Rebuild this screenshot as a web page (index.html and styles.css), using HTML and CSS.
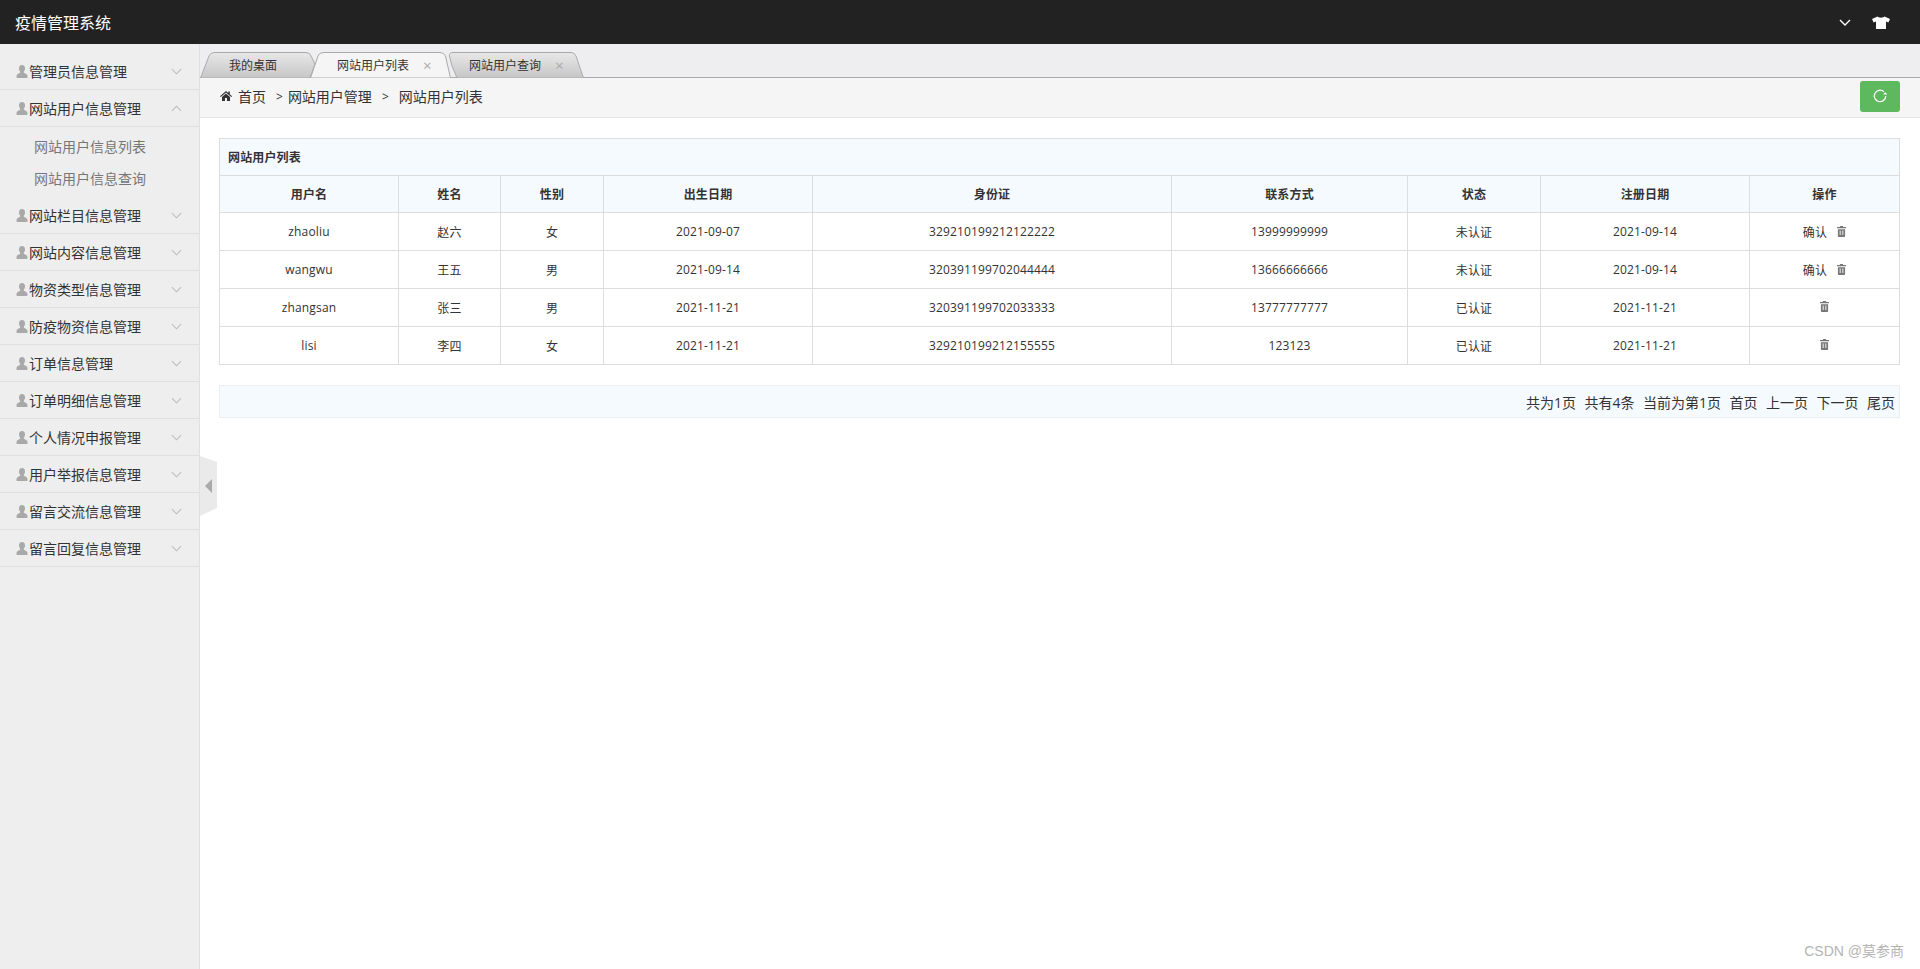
FILE: index.html
```html
<!DOCTYPE html>
<html lang="zh-CN">
<head>
<meta charset="utf-8">
<title>疫情管理系统</title>
<link rel="stylesheet" href="styles.css">
</head>
<body>
<header class="topbar">
  <div class="brand">疫情管理系统</div>
  <div class="top-actions">
    <svg class="top-chevron" viewBox="0 0 12 7"><path d="M1 1l5 5 5-5" fill="none" stroke="#fff" stroke-width="1.4"/></svg>
    <svg class="top-shirt" viewBox="0 0 18 13"><path d="M5.5 0.5L0 3l1.6 3.4L4 5.6V13h10V5.6l2.4.8L18 3 12.5.5C11.5 2 6.500 2 5.500.5z" fill="#fff"/></svg>
  </div>
</header>
<div class="shell">
  <aside class="sidebar">
    <div class="menu-item"><div class="menu-title"><svg class="user-ic" viewBox="0 0 12 13"><use href="#u"/></svg><span>管理员信息管理</span><svg class="chev" viewBox="0 0 12 7"><path d="M1 1l5 5 5-5"/></svg></div></div>
    <div class="menu-item"><div class="menu-title"><svg class="user-ic" viewBox="0 0 12 13"><use href="#u"/></svg><span>网站用户信息管理</span><svg class="chev" viewBox="0 0 12 7"><path d="M1 6l5-5 5 5"/></svg></div>
      <ul class="submenu"><li>网站用户信息列表</li><li>网站用户信息查询</li></ul></div>
    <div class="menu-item"><div class="menu-title"><svg class="user-ic" viewBox="0 0 12 13"><use href="#u"/></svg><span>网站栏目信息管理</span><svg class="chev" viewBox="0 0 12 7"><path d="M1 1l5 5 5-5"/></svg></div></div>
    <div class="menu-item"><div class="menu-title"><svg class="user-ic" viewBox="0 0 12 13"><use href="#u"/></svg><span>网站内容信息管理</span><svg class="chev" viewBox="0 0 12 7"><path d="M1 1l5 5 5-5"/></svg></div></div>
    <div class="menu-item"><div class="menu-title"><svg class="user-ic" viewBox="0 0 12 13"><use href="#u"/></svg><span>物资类型信息管理</span><svg class="chev" viewBox="0 0 12 7"><path d="M1 1l5 5 5-5"/></svg></div></div>
    <div class="menu-item"><div class="menu-title"><svg class="user-ic" viewBox="0 0 12 13"><use href="#u"/></svg><span>防疫物资信息管理</span><svg class="chev" viewBox="0 0 12 7"><path d="M1 1l5 5 5-5"/></svg></div></div>
    <div class="menu-item"><div class="menu-title"><svg class="user-ic" viewBox="0 0 12 13"><use href="#u"/></svg><span>订单信息管理</span><svg class="chev" viewBox="0 0 12 7"><path d="M1 1l5 5 5-5"/></svg></div></div>
    <div class="menu-item"><div class="menu-title"><svg class="user-ic" viewBox="0 0 12 13"><use href="#u"/></svg><span>订单明细信息管理</span><svg class="chev" viewBox="0 0 12 7"><path d="M1 1l5 5 5-5"/></svg></div></div>
    <div class="menu-item"><div class="menu-title"><svg class="user-ic" viewBox="0 0 12 13"><use href="#u"/></svg><span>个人情况申报管理</span><svg class="chev" viewBox="0 0 12 7"><path d="M1 1l5 5 5-5"/></svg></div></div>
    <div class="menu-item"><div class="menu-title"><svg class="user-ic" viewBox="0 0 12 13"><use href="#u"/></svg><span>用户举报信息管理</span><svg class="chev" viewBox="0 0 12 7"><path d="M1 1l5 5 5-5"/></svg></div></div>
    <div class="menu-item"><div class="menu-title"><svg class="user-ic" viewBox="0 0 12 13"><use href="#u"/></svg><span>留言交流信息管理</span><svg class="chev" viewBox="0 0 12 7"><path d="M1 1l5 5 5-5"/></svg></div></div>
    <div class="menu-item"><div class="menu-title"><svg class="user-ic" viewBox="0 0 12 13"><use href="#u"/></svg><span>留言回复信息管理</span><svg class="chev" viewBox="0 0 12 7"><path d="M1 1l5 5 5-5"/></svg></div></div>
    <svg class="collapse" viewBox="0 0 17 60"><path d="M0 0l17 6v46L0 60z" fill="#eaeaea"/><path d="M12 23v14l-7-7z" fill="#aaa"/></svg>
  </aside>
  <main class="content">
    <div class="tabs">
      <div class="tab tab-a">
        <svg class="tab-bg" viewBox="0 0 116 26"><defs><linearGradient id="tg" x1="0" y1="0" x2="0" y2="1"><stop offset="0" stop-color="#e8e8e8"/><stop offset="1" stop-color="#c6c6c6"/></linearGradient></defs><path d="M.5 26L9 4Q10.500.5 14 .5H106Q110 .5 111 4L115 12 110 26z" fill="url(#tg)" stroke="#aaa"/></svg>
        <span class="tab-text">我的桌面</span>
      </div>
      <div class="tab tab-b">
        <svg class="tab-bg" viewBox="0 0 141 26"><path d="M.5 26L8 4Q9.500.5 13 .5H130Q134 .5 135.500 4L140.500 26z" fill="#f5f5f5" stroke="#aaa"/></svg>
        <span class="tab-text">网站用户列表</span><span class="tab-x">×</span>
      </div>
      <div class="tab tab-c">
        <svg class="tab-bg" viewBox="0 0 136 26"><path d="M4 14L1.500 4Q1 .5 5 .5H123Q126.500.5 128 4L135.500 26H9z" fill="url(#tg)" stroke="#aaa"/></svg>
        <span class="tab-text">网站用户查询</span><span class="tab-x">×</span>
      </div>
    </div>
    <nav class="crumbs">
      <svg class="home" viewBox="0 0 12 10"><path d="M6 0L0 5.200l.8.800L6 1.600 11.200 6l.8-.8L9.800 3.300V.6H8.300v1.400zM6 2.600L2 6v4h3V7h2v3h3V6z" fill="#333"/></svg>
      <span>首页</span>
      <span class="sep">&gt;</span><span>网站用户管理</span>
      <span class="sep sep-wide">&gt;</span><span>网站用户列表</span>
      <button class="refresh" type="button" aria-label="刷新"><svg viewBox="0 0 14 14"><path d="M12 7a5 5 0 1 1-1.600-3.700" fill="none" stroke="#fff" stroke-width="1.100"/><path d="M13.400 5.700H9.800l1.800-2z" fill="#fff"/></svg></button>
    </nav>
    <section class="panel">
      <table class="grid">
        <colgroup><col class="c1"><col class="c2"><col class="c3"><col class="c4"><col class="c5"><col class="c6"><col class="c7"><col class="c8"><col class="c9"></colgroup>
        <thead>
          <tr><th class="caption-cell" colspan="9">网站用户列表</th></tr>
          <tr><th>用户名</th><th>姓名</th><th>性别</th><th>出生日期</th><th>身份证</th><th>联系方式</th><th>状态</th><th>注册日期</th><th>操作</th></tr>
        </thead>
        <tbody>
          <tr><td>zhaoliu</td><td>赵六</td><td>女</td><td>2021-09-07</td><td>329210199212122222</td><td>13999999999</td><td>未认证</td><td>2021-09-14</td><td><span class="confirm">确认</span><svg class="trash" viewBox="0 0 10 12"><use href="#t"/></svg></td></tr>
          <tr><td>wangwu</td><td>王五</td><td>男</td><td>2021-09-14</td><td>320391199702044444</td><td>13666666666</td><td>未认证</td><td>2021-09-14</td><td><span class="confirm">确认</span><svg class="trash" viewBox="0 0 10 12"><use href="#t"/></svg></td></tr>
          <tr><td>zhangsan</td><td>张三</td><td>男</td><td>2021-11-21</td><td>320391199702033333</td><td>13777777777</td><td>已认证</td><td>2021-11-21</td><td><svg class="trash" viewBox="0 0 10 12"><use href="#t"/></svg></td></tr>
          <tr><td>lisi</td><td>李四</td><td>女</td><td>2021-11-21</td><td>329210199212155555</td><td>123123</td><td>已认证</td><td>2021-11-21</td><td><svg class="trash" viewBox="0 0 10 12"><use href="#t"/></svg></td></tr>
        </tbody>
      </table>
      <div class="pager"><span>共为1页</span><span>共有4条</span><span>当前为第1页</span><span>首页</span><span>上一页</span><span>下一页</span><span>尾页</span></div>
    </section>
  </main>
</div>
<div class="watermark">CSDN @莫参商</div>
<svg class="defs" aria-hidden="true">
  <symbol id="u" viewBox="0 0 12 13"><path d="M6 0C4 0 3 1.500 3 3.500c0 1.400.5 2.500 1.200 3.200v1C3 8.600 0.500 9 .5 11v1.500c0 .3.2.5.500.5h10c.3 0 .5-.2.5-.5V11c0-2-2.500-2.400-3.700-3.300v-1C8.500 6 9 4.900 9 3.500 9 1.500 8 0 6 0z" fill="#a9a9a9"/></symbol>
  <symbol id="t" viewBox="0 0 10 12"><path d="M3.500 0h3l.5 1h3v1.500H0V1h3zM1 3.500h8V11c0 .6-.4 1-1 1H2c-.6 0-1-.4-1-1zM3 5v5h1V5zm3 0v5h1V5z" fill="#777" fill-rule="evenodd"/></symbol>
</svg>
</body>
</html>
```

FILE: styles.css
```css
* { box-sizing: border-box; }
html, body { height: 100%; }
body {
  margin: 0;
  display: flex;
  flex-direction: column;
  font-family: "Open Sans", "Noto Sans CJK SC", sans-serif;
  font-size: 14px;
  color: #333;
  background: #fff;
  overflow: hidden;
}
.topbar {
  height: 44px;
  flex: none;
  background: #222;
  display: flex;
  align-items: center;
  justify-content: space-between;
  padding: 0 30px 0 15px;
}
.brand { color: #fff; font-size: 16px; }
.top-actions { display: flex; align-items: center; gap: 21px; }
.top-chevron { width: 12px; height: 7px; }
.top-shirt { width: 18px; height: 13px; }

.shell { flex: 1; display: flex; min-height: 0; }
.sidebar {
  width: 200px;
  flex: none;
  background: #eee;
  border-right: 1px solid #e0e0e0;
  padding-top: 9px;
  position: relative;
}
.menu-title {
  height: 37px;
  display: flex;
  align-items: center;
  padding: 0 17px 0 16px;
  border-bottom: 1px solid #e0e0e0;
  color: #333;
}
.user-ic { width: 12px; height: 13px; margin-right: 1px; flex: none; }
.menu-title span { flex: 1; }
.chev { width: 11px; height: 7px; fill: none; stroke: #bbb; stroke-width: 1.100; flex: none; }
.submenu { list-style: none; margin: 0; padding: 4px 0 2px 34px; height: 70px; color: #777; }
.submenu li { height: 32px; line-height: 32px; }
.collapse { position: absolute; left: 200px; top: 412px; width: 17px; height: 60px; z-index: 2; }

.content { flex: 1; min-width: 0; display: flex; flex-direction: column; }
.tabs {
  height: 34px;
  flex: none;
  display: flex;
  background: #eeeef0;
  border-bottom: 1px solid #aaa;
  padding-top: 8px;
}
.tab {
  position: relative;
  height: 26px;
  flex: none;
  display: flex;
  align-items: center;
  font-size: 12px;
  color: #333;
}
.tab-bg { position: absolute; left: 0; top: 0; width: 100%; height: 100%; }
.tab-text, .tab-x { position: relative; }
.tab-x { color: #aaa; font-size: 15px; margin-left: 14px; }
.tab-a { width: 116px; padding-left: 29px; }
.tab-b { width: 141px; padding-left: 27px; margin-left: -6px; z-index: 2; }
.tab-c { width: 136px; padding-left: 21px; margin-left: -3px; z-index: 1; }

.crumbs {
  height: 40px;
  flex: none;
  display: flex;
  align-items: center;
  background: #f5f5f5;
  border-bottom: 1px solid #e5e5e5;
  padding: 0 20px 3px;
  font-size: 14px;
  color: #333;
}
.home { width: 12px; height: 10px; margin-right: 6px; }
.sep { margin: 0 5px 0 10px; font-size: 12px; }
.sep-wide { margin-right: 10px; }
.refresh {
  margin-left: auto;
  width: 40px;
  height: 31px;
  border: 0;
  border-radius: 3px;
  background: #5eb95e;
  padding: 0;
  display: flex;
  align-items: center;
  justify-content: center;
}
.refresh svg { width: 16px; height: 16px; }

.panel { padding: 20px 20px 0 19px; }
.grid {
  width: 1681px;
  table-layout: fixed;
  border-collapse: collapse;
  font-size: 12px;
  color: #333;
}
.c1 { width: 179px; }
.c2 { width: 102px; }
.c3 { width: 103px; }
.c4 { width: 209px; }
.c5 { width: 359px; }
.c6 { width: 236px; }
.c7 { width: 133px; }
.c8 { width: 209px; }
.c9 { width: 150px; }
.grid th, .grid td {
  border: 1px solid #ddd;
  text-align: center;
  padding: 0;
  letter-spacing: .14px;
}
.grid th { height: 37px; background: #f5fafe; font-weight: 700; }
.grid td { height: 38px; }
.grid th.caption-cell { text-align: left; padding-left: 8px; }
.confirm { margin-right: 10px; }
.trash { width: 9px; height: 11px; vertical-align: 0; }
.pager {
  margin-top: 20px;
  width: 1681px;
  height: 33px;
  display: flex;
  justify-content: flex-end;
  align-items: center;
  gap: 8.500px;
  padding-right: 4px;
  background: #f5fafe;
  border: 1px solid #eee;
  font-size: 14px;
  color: #333;
}
.watermark {
  position: absolute;
  right: 16px;
  top: 941px;
  font-family: "Liberation Sans", "Noto Sans CJK SC", sans-serif;
  font-size: 14px;
  line-height: 20px;
  color: #b4b4b4;
}
.defs { position: absolute; width: 0; height: 0; }
```
